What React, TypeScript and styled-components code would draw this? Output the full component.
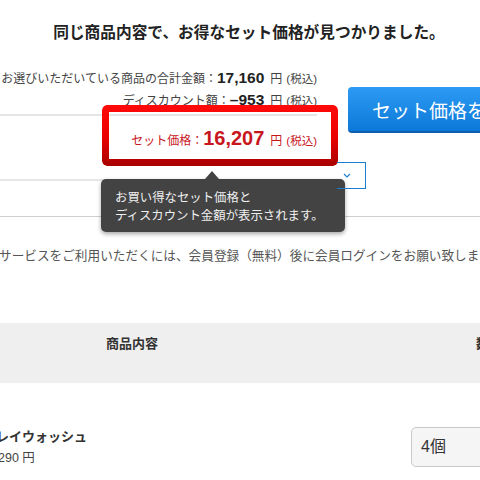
import styled, { createGlobalStyle } from "styled-components";

const GlobalStyle = createGlobalStyle`
  html, body {
    margin: 0;
    padding: 0;
    background: #fff;
  }
  body {
    width: 480px;
    height: 480px;
    overflow: hidden;
    font-family: "Liberation Sans", "Noto Sans CJK JP", sans-serif;
    color: #333;
  }
`;

const Page = styled.div`
  position: relative;
  width: 480px;
`;

const Title = styled.h1`
  margin: 0;
  padding: 22px 0 0 18px;
  text-align: center;
  font-size: 15.7px;
  line-height: 22px;
  font-weight: bold;
  color: #222;
  white-space: nowrap;
`;

const PriceArea = styled.div`
  display: flex;
  align-items: flex-start;
  margin-top: 23px;
`;

const Summary = styled.div`
  flex: none;
  width: 317px;
`;

const SumRow = styled.div<{ $red?: boolean }>`
  display: flex;
  justify-content: flex-end;
  align-items: baseline;
  height: 22px;
  line-height: 22px;
  white-space: nowrap;
  color: ${({ $red }) => ($red ? "#c8161d" : "#444")};
`;

const SetRow = styled(SumRow)`
  margin: 11px 0 30px;
`;

const Label = styled.span`
  font-size: 12px;
`;

const Amount = styled.strong<{ $size: number; $red?: boolean }>`
  font-size: ${({ $size }) => $size}px;
  font-weight: bold;
  margin-right: 6px;
  color: ${({ $red }) => ($red ? "#c8161d" : "#222")};
`;

const Yen = styled.span`
  font-size: 12px;
  margin-right: 4px;
`;

const Tax = styled.span`
  font-size: 11.5px;
`;

const Rule = styled.div<{ $mt: number }>`
  height: 2px;
  margin-top: ${({ $mt }) => $mt}px;
  background: #e6e6e6;
`;

const Side = styled.div`
  flex: none;
  width: 300px;
  margin-left: 20px;
  display: flex;
  flex-direction: column;
  align-items: flex-start;
`;

const SetButton = styled.button`
  margin: 20px 0 0 11px;
  width: 260px;
  height: 46px;
  padding: 0 0 0 24px;
  text-align: left;
  border: none;
  border-bottom: 2px solid #0b5fae;
  border-radius: 4px;
  background: linear-gradient(#2d9bf4, #0c78d8);
  color: #fff;
  font-family: "Noto Sans CJK JP", sans-serif;
  font-size: 19px;
  white-space: nowrap;
`;

const Dropdown = styled.div`
  position: relative;
  z-index: 3;
  box-sizing: border-box;
  margin-top: 29px;
  width: 29px;
  height: 27px;
  border: 1px solid #1a7fd0;
  border-left: none;
  display: flex;
  align-items: center;
  padding-left: 6px;
`;

const FullRule = styled.div`
  height: 1px;
  margin-top: 27px;
  background: #cfcfcf;
`;

const Notice = styled.p`
  margin: 28px 0 0 -1px;
  font-family: "Noto Sans CJK JP", sans-serif;
  font-size: 12.65px;
  line-height: 20px;
  color: #555;
  white-space: nowrap;
`;

const TableHead = styled.div`
  display: grid;
  grid-template-columns: 476px 1fr;
  height: 60px;
  margin-top: 58px;
  background: #efefef;
`;

const HeadCell = styled.div<{ $pl?: number }>`
  padding: 10px 0 0 ${({ $pl }) => $pl ?? 0}px;
  font-family: "Noto Sans CJK JP", sans-serif;
  font-size: 13px;
  line-height: 20px;
  font-weight: bold;
  color: #333;
  white-space: nowrap;
`;

const ItemRow = styled.div`
  display: grid;
  grid-template-columns: 411px 1fr;
  margin-top: 43px;
`;

const ItemName = styled.div`
  margin-left: -4px;
  font-family: "Noto Sans CJK JP", sans-serif;
  font-size: 13px;
  line-height: 20px;
  font-weight: bold;
  color: #333;
  white-space: nowrap;
`;

const ItemPrice = styled.div`
  margin: 3px 0 0 -2px;
  font-size: 12.5px;
  line-height: 18px;
  color: #444;
`;

const QtySelect = styled.div`
  box-sizing: border-box;
  margin-top: 1px;
  width: 120px;
  height: 40px;
  padding-left: 9px;
  border: 1px solid #c9c9c9;
  border-radius: 5px;
  background: #f5f5f5;
  font-size: 16px;
  line-height: 38px;
  color: #333;
`;

const Frame = styled.div`
  position: absolute;
  left: 102px;
  top: 105px;
  width: 236px;
  height: 61px;
  box-sizing: border-box;
  border: 7px solid transparent;
  border-radius: 5px;
  background: linear-gradient(#ff0a0a, #e80000 55%, #a80000) border-box;
  -webkit-mask: linear-gradient(#000 0 0) padding-box,
    linear-gradient(#000 0 0) border-box;
  -webkit-mask-composite: xor;
  mask: linear-gradient(#000 0 0) padding-box exclude,
    linear-gradient(#000 0 0) border-box;
  z-index: 2;
`;

const Tooltip = styled.div`
  position: absolute;
  left: 101px;
  top: 179px;
  width: 244px;
  height: 53px;
  box-sizing: border-box;
  padding: 9px 14px 0;
  border-radius: 5px;
  background: #434343;
  box-shadow: 0 2px 4px rgba(0, 0, 0, 0.35);
  font-family: "Noto Sans CJK JP", sans-serif;
  font-size: 12.4px;
  line-height: 18px;
  color: #f0f0f0;
  white-space: nowrap;
  z-index: 2;

  &::before {
    content: "";
    position: absolute;
    left: 104px;
    top: -8px;
    border-left: 7px solid transparent;
    border-right: 7px solid transparent;
    border-bottom: 8px solid #434343;
  }
`;

const Chevron = () => (
  <svg width="8" height="5" viewBox="0 0 8 5">
    <path d="M1 1l3 3 3-3" fill="none" stroke="#1a7fd0" strokeWidth="1.2" />
  </svg>
);

export default function App() {
  return (
    <Page>
      <GlobalStyle />
      <Title>同じ商品内容で、お得なセット価格が見つかりました。</Title>

      <PriceArea>
        <Summary>
          <SumRow>
            <Label>お選びいただいている商品の合計金額：</Label>
            <Amount $size={15.5}>17,160</Amount>
            <Yen>円</Yen>
            <Tax>(税込)</Tax>
          </SumRow>
          <SumRow>
            <Label>ディスカウント額：</Label>
            <Amount $size={15.5}>–953</Amount>
            <Yen>円</Yen>
            <Tax>(税込)</Tax>
          </SumRow>
          <Rule $mt={3} />
          <SetRow $red>
            <Label>セット価格：</Label>
            <Amount $size={20} $red>
              16,207
            </Amount>
            <Yen>円</Yen>
            <Tax>(税込)</Tax>
          </SetRow>
          <Rule $mt={0} />
        </Summary>
        <Side>
          <SetButton>セット価格を適用する</SetButton>
          <Dropdown>
            <Chevron />
          </Dropdown>
        </Side>
      </PriceArea>

      <FullRule />
      <Notice>
        サービスをご利用いただくには、会員登録（無料）後に会員ログインをお願い致します。
      </Notice>

      <TableHead>
        <HeadCell $pl={106}>商品内容</HeadCell>
        <HeadCell>数量</HeadCell>
      </TableHead>

      <ItemRow>
        <div>
          <ItemName>レイウォッシュ</ItemName>
          <ItemPrice>290 円</ItemPrice>
        </div>
        <QtySelect>4個</QtySelect>
      </ItemRow>

      <Frame />
      <Tooltip>
        お買い得なセット価格と
        <br />
        ディスカウント金額が表示されます。
      </Tooltip>
    </Page>
  );
}
